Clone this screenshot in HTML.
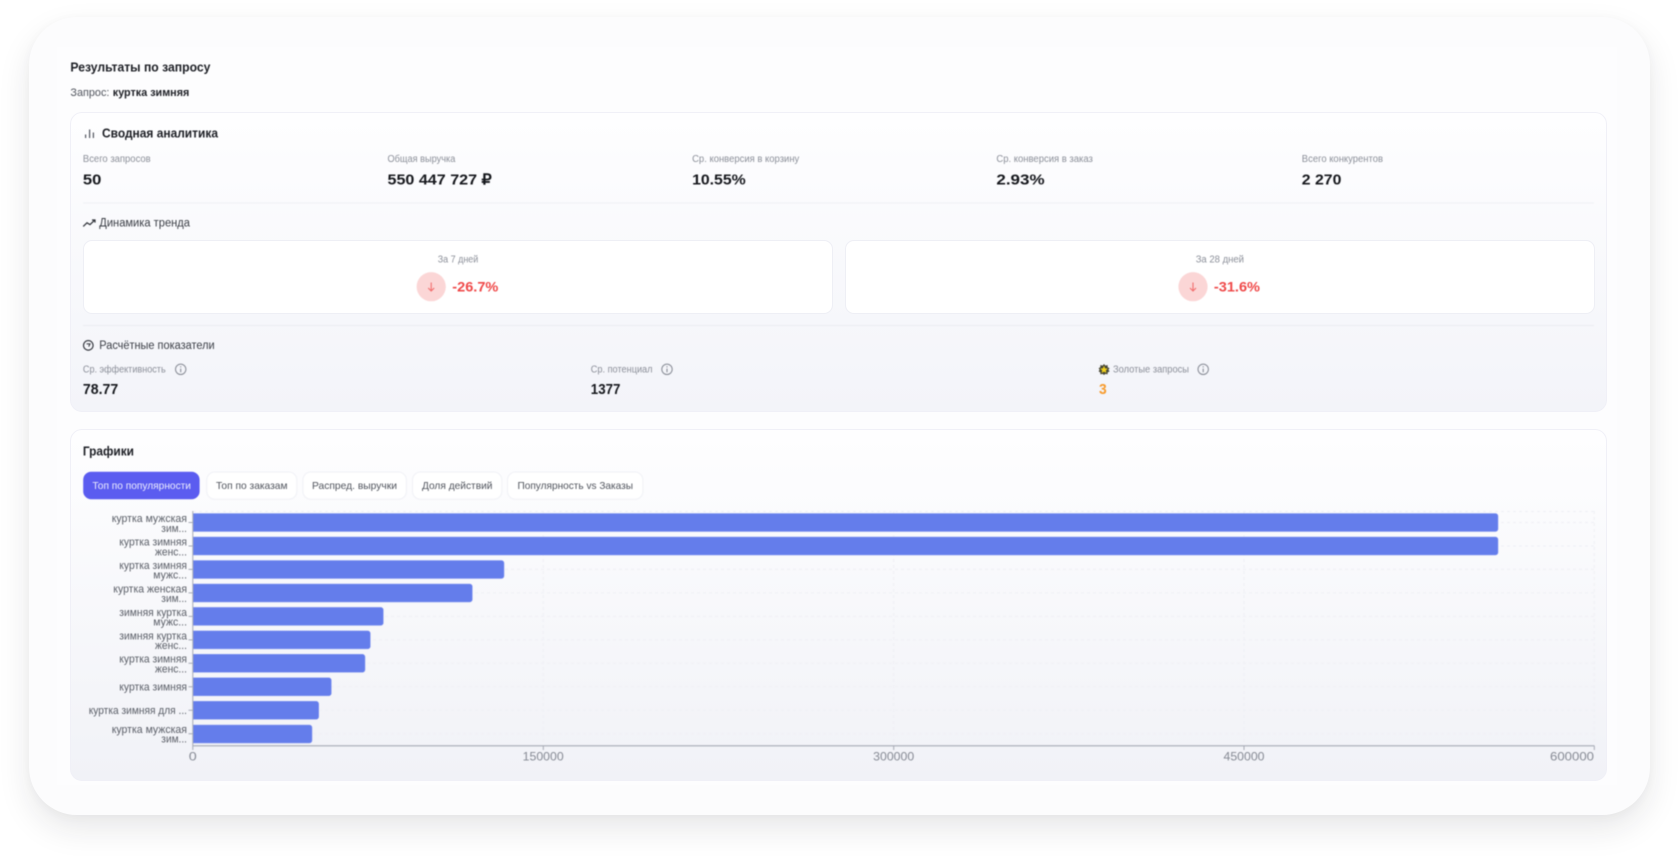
<!DOCTYPE html>
<html lang="ru">
<head>
<meta charset="utf-8">
<title>Результаты по запросу</title>
<style>
html,body{margin:0;padding:0;width:1680px;height:856px;overflow:hidden;background:#fff}
.card{position:absolute;left:29px;top:17px;width:1621px;height:798px;border-radius:48px;background:#fcfcfd;box-shadow:0 14px 32px rgba(30,30,40,.10),0 2px 10px rgba(30,30,40,.03)}
.inner{position:absolute;left:57px;top:47px;width:1560px;height:738px;background:#fdfdfe}
.panel{position:absolute;box-sizing:border-box;border:1px solid #f0f0f7;border-radius:12px}
.p1{left:70px;top:112px;width:1537px;height:300px;background:linear-gradient(#fefeff,#f3f4f9)}
.p2{left:70px;top:429px;width:1537px;height:352px;background:linear-gradient(#fefeff,#f1f2f7)}
.box{position:absolute;box-sizing:border-box;background:#fff;border:1px solid #eeeff5;border-radius:9px;top:240px;height:74px}
svg{position:absolute;left:0;top:0;filter:blur(.45px)}
text{font-family:"Liberation Sans",sans-serif;white-space:pre}
.b{font-weight:700;fill:#1d1f25}
.l{font-size:10px;fill:#8b8f99}
.m{font-size:11.5px;fill:#3a3d45}
.v{font-size:15px;font-weight:700;fill:#16181d}
.t{font-size:10.5px;fill:#50545d}
.y{font-size:10.8px;fill:#5a5e67}
.x{font-size:12px;fill:#868a94}
</style>
</head>
<body>
<div class="card"></div>
<div class="inner"></div>
<div class="panel p1"></div>
<div class="panel p2"></div>
<div class="box" style="left:83px;width:750px"></div>
<div class="box" style="left:844.5px;width:750px"></div>

<svg width="1680" height="856" viewBox="0 0 1680 856" xmlns="http://www.w3.org/2000/svg">
  <!-- header -->
  <text class="b" x="70.4" y="71.3" font-size="13" textLength="140" lengthAdjust="spacingAndGlyphs">Результаты по запросу</text>
  <text x="70.4" y="96" font-size="11" fill="#50545d" textLength="39" lengthAdjust="spacingAndGlyphs">Запрос:</text>
  <text class="b" x="112.8" y="96" font-size="11" textLength="76.5" lengthAdjust="spacingAndGlyphs">куртка зимняя</text>

  <!-- summary -->
  <path d="M85.6 138V134.5M89.6 138V129.5M93.4 138V132.5" stroke="#50545d" stroke-width="1.2" fill="none"/>
  <text class="b" x="102" y="137.7" font-size="12.5" textLength="116" lengthAdjust="spacingAndGlyphs">Сводная аналитика</text>

  <text class="l" x="82.9" y="162" textLength="67.8" lengthAdjust="spacingAndGlyphs">Всего запросов</text>
  <text class="v" x="82.9" y="184.7" textLength="18.5" lengthAdjust="spacingAndGlyphs">50</text>
  <text class="l" x="387.5" y="162" textLength="67.9" lengthAdjust="spacingAndGlyphs">Общая выручка</text>
  <text class="v" x="387.5" y="184.7" textLength="104.3" lengthAdjust="spacingAndGlyphs">550 447 727 ₽</text>
  <text class="l" x="692.1" y="162" textLength="107.2" lengthAdjust="spacingAndGlyphs">Ср. конверсия в корзину</text>
  <text class="v" x="692.1" y="184.7" textLength="53.6" lengthAdjust="spacingAndGlyphs">10.55%</text>
  <text class="l" x="996.4" y="162" textLength="96.5" lengthAdjust="spacingAndGlyphs">Ср. конверсия в заказ</text>
  <text class="v" x="996.4" y="184.7" textLength="48.2" lengthAdjust="spacingAndGlyphs">2.93%</text>
  <text class="l" x="1301.8" y="162" textLength="81.2" lengthAdjust="spacingAndGlyphs">Всего конкурентов</text>
  <text class="v" x="1301.8" y="184.7" textLength="39.6" lengthAdjust="spacingAndGlyphs">2 270</text>

  <rect x="83" y="202.5" width="1511" height="1" fill="#f0f1f6"/>

  <!-- trend -->
  <path d="M83.2 226.4L87 222.8L90 224.6L94.4 220.4M92 220H95V222.6" stroke="#2e3138" stroke-width="1.2" fill="none"/>
  <text class="m" x="99.3" y="226.7" textLength="90.7" lengthAdjust="spacingAndGlyphs">Динамика тренда</text>

  <text class="l" x="437.7" y="262.3" textLength="40.6" lengthAdjust="spacingAndGlyphs">За 7 дней</text>
  <circle cx="431.2" cy="286.7" r="14.6" fill="#fbd6d6"/>
  <path d="M431.2 282.5V290.8M428.2 288L431.2 291L434.2 288" stroke="#f26d6d" stroke-width="1.1" fill="none"/>
  <text x="452.3" y="291.7" font-size="14" font-weight="700" fill="#ef4848" textLength="46" lengthAdjust="spacingAndGlyphs">-26.7%</text>

  <text class="l" x="1195.7" y="262.3" textLength="48.3" lengthAdjust="spacingAndGlyphs">За 28 дней</text>
  <circle cx="1193" cy="286.7" r="14.6" fill="#fbd6d6"/>
  <path d="M1193 282.5V290.8M1190 288L1193 291L1196 288" stroke="#f26d6d" stroke-width="1.1" fill="none"/>
  <text x="1213.9" y="291.7" font-size="14" font-weight="700" fill="#ef4848" textLength="46.1" lengthAdjust="spacingAndGlyphs">-31.6%</text>

  <rect x="83" y="325" width="1511" height="1" fill="#ebecf2"/>

  <!-- computed -->
  <circle cx="88.3" cy="345.4" r="4.8" fill="none" stroke="#2e3138" stroke-width="1.1"/>
  <path d="M86.6 343.9H90L88.7 346.6" stroke="#2e3138" stroke-width="1" fill="none"/>
  <text class="m" x="99.3" y="349" textLength="115.3" lengthAdjust="spacingAndGlyphs">Расчётные показатели</text>

  <text class="l" x="82.9" y="372.3" textLength="82.8" lengthAdjust="spacingAndGlyphs">Ср. эффективность</text>
  <circle cx="180.7" cy="369.3" r="5.2" fill="none" stroke="#878b95" stroke-width="1"/>
  <path d="M180.7 368.6V372.2M180.7 366.3V367.4" stroke="#878b95" stroke-width="1.1" fill="none"/>
  <text class="v" x="82.9" y="394" textLength="35.3" lengthAdjust="spacingAndGlyphs">78.77</text>

  <text class="l" x="590.8" y="372.3" textLength="61.7" lengthAdjust="spacingAndGlyphs">Ср. потенциал</text>
  <circle cx="667" cy="369.3" r="5.2" fill="none" stroke="#878b95" stroke-width="1"/>
  <path d="M667 368.6V372.2M667 366.3V367.4" stroke="#878b95" stroke-width="1.1" fill="none"/>
  <text class="v" x="590.8" y="394" textLength="29.6" lengthAdjust="spacingAndGlyphs">1377</text>

  <polygon points="1104,364 1105.5,365.6 1107.6,365 1107.7,367.2 1109.6,368.2 1108.4,369.8 1109.6,371.4 1107.7,372.4 1107.6,374.4 1105.5,373.9 1104,375 1102.5,373.9 1100.4,374.4 1100.3,372.4 1098.6,371.4 1099.6,369.8 1098.6,368.2 1100.3,367.2 1100.4,365 1102.5,365.6" fill="#4a4a38"/>
  <polygon points="1104,365.8 1105.1,368.4 1107.8,368.6 1105.8,370.4 1106.4,373 1104,371.6 1101.6,373 1102.2,370.4 1100.2,368.6 1102.9,368.4" fill="#f2d21c"/>
  <text class="l" x="1113" y="372.3" textLength="76" lengthAdjust="spacingAndGlyphs">Золотые запросы</text>
  <circle cx="1203.2" cy="369.3" r="5.2" fill="none" stroke="#878b95" stroke-width="1"/>
  <path d="M1203.2 368.6V372.2M1203.2 366.3V367.4" stroke="#878b95" stroke-width="1.1" fill="none"/>
  <text x="1099" y="394" font-size="15" font-weight="700" fill="#f79a2b" textLength="7.7" lengthAdjust="spacingAndGlyphs">3</text>

  <!-- charts header -->
  <text class="b" x="82.9" y="455.3" font-size="13" textLength="51.1" lengthAdjust="spacingAndGlyphs">Графики</text>

  <!-- tabs -->
  <rect x="83.2" y="471.8" width="116.4" height="27.4" rx="8" fill="#5b5cf0"/>
  <rect x="206.8" y="472" width="90" height="27.2" rx="8" fill="#fff" stroke="#f0f1f6"/>
  <rect x="302.9" y="472" width="103.5" height="27.2" rx="8" fill="#fff" stroke="#f0f1f6"/>
  <rect x="412.5" y="472" width="89.3" height="27.2" rx="8" fill="#fff" stroke="#f0f1f6"/>
  <rect x="507.5" y="472" width="135.4" height="27.2" rx="8" fill="#fff" stroke="#f0f1f6"/>
  <text x="92.4" y="489" font-size="10.5" fill="#eeeeff" textLength="98.6" lengthAdjust="spacingAndGlyphs">Топ по популярности</text>
  <text class="t" x="216" y="489" textLength="71.5" lengthAdjust="spacingAndGlyphs">Топ по заказам</text>
  <text class="t" x="312" y="489" textLength="85" lengthAdjust="spacingAndGlyphs">Распред. выручки</text>
  <text class="t" x="422" y="489" textLength="70.5" lengthAdjust="spacingAndGlyphs">Доля действий</text>
  <text class="t" x="517.5" y="489" textLength="115.5" lengthAdjust="spacingAndGlyphs">Популярность vs Заказы</text>

  <!-- grid -->
  <g stroke="#eff0f5" stroke-width="1" stroke-dasharray="3 3" fill="none">
    <path d="M193 511.5H1594"/>
    <path d="M193 522.5H1594M193 546H1594M193 569.4H1594M193 592.9H1594M193 616.4H1594M193 639.9H1594M193 663.3H1594M193 686.8H1594M193 710.3H1594M193 733.7H1594"/>
    <path d="M543.3 511V746M893.7 511V746M1244 511V746M1594.3 511V746"/>
  </g>

  <!-- bars -->
  <g fill="#647deb" stroke="#8498f0" stroke-width=".5">
    <path d="M193 513.5H1495.5a2.5 2.5 0 0 1 2.5 2.5V529a2.5 2.5 0 0 1-2.5 2.5H193Z"/>
    <path d="M193 537H1495.5a2.5 2.5 0 0 1 2.5 2.5V552.5a2.5 2.5 0 0 1-2.5 2.5H193Z"/>
    <path d="M193 560.5H501.5a2.5 2.5 0 0 1 2.5 2.5V576a2.5 2.5 0 0 1-2.5 2.5H193Z"/>
    <path d="M193 584H469.8a2.5 2.5 0 0 1 2.5 2.5V599.5a2.5 2.5 0 0 1-2.5 2.5H193Z"/>
    <path d="M193 607.4H380.8a2.5 2.5 0 0 1 2.5 2.5V622.9a2.5 2.5 0 0 1-2.5 2.5H193Z"/>
    <path d="M193 630.9H367.8a2.5 2.5 0 0 1 2.5 2.5V646.4a2.5 2.5 0 0 1-2.5 2.5H193Z"/>
    <path d="M193 654.3H362.5a2.5 2.5 0 0 1 2.5 2.5V669.8a2.5 2.5 0 0 1-2.5 2.5H193Z"/>
    <path d="M193 677.8H328.8a2.5 2.5 0 0 1 2.5 2.5V693.3a2.5 2.5 0 0 1-2.5 2.5H193Z"/>
    <path d="M193 701.3H316.2a2.5 2.5 0 0 1 2.5 2.5V716.8a2.5 2.5 0 0 1-2.5 2.5H193Z"/>
    <path d="M193 725H309.5a2.5 2.5 0 0 1 2.5 2.5V740.5a2.5 2.5 0 0 1-2.5 2.5H193Z"/>
  </g>

  <!-- axes -->
  <path d="M192.8 511V746" stroke="#a6aab5" stroke-width="1" fill="none"/>
  <path d="M192.5 745.8H1594.5" stroke="#a6aab5" stroke-width="1.1" fill="none"/>
  <path d="M192.8 746V750M543.3 746V750M893.7 746V750M1244 746V750M1594.3 746V750" stroke="#a6aab5" stroke-width="1" fill="none"/>
  <path d="M188.5 522.5H192.5M188.5 546H192.5M188.5 569.4H192.5M188.5 592.9H192.5M188.5 616.4H192.5M188.5 639.9H192.5M188.5 663.3H192.5M188.5 686.8H192.5M188.5 710.3H192.5M188.5 733.7H192.5" stroke="#a6aab5" stroke-width="1" fill="none"/>

  <!-- y labels -->
  <text class="y" x="111.7" y="522" textLength="75.3" lengthAdjust="spacingAndGlyphs">куртка мужская</text>
  <text class="y" x="161.3" y="531.8" textLength="25.7" lengthAdjust="spacingAndGlyphs">зим...</text>
  <text class="y" x="119.3" y="545.5" textLength="67.7" lengthAdjust="spacingAndGlyphs">куртка зимняя</text>
  <text class="y" x="155" y="555.3" textLength="32" lengthAdjust="spacingAndGlyphs">женс...</text>
  <text class="y" x="119.3" y="569" textLength="67.7" lengthAdjust="spacingAndGlyphs">куртка зимняя</text>
  <text class="y" x="153.3" y="578.7" textLength="33.7" lengthAdjust="spacingAndGlyphs">мужс...</text>
  <text class="y" x="113.3" y="592.4" textLength="73.7" lengthAdjust="spacingAndGlyphs">куртка женская</text>
  <text class="y" x="161.3" y="602.2" textLength="25.7" lengthAdjust="spacingAndGlyphs">зим...</text>
  <text class="y" x="119.3" y="615.9" textLength="67.7" lengthAdjust="spacingAndGlyphs">зимняя куртка</text>
  <text class="y" x="153.3" y="625.6" textLength="33.7" lengthAdjust="spacingAndGlyphs">мужс...</text>
  <text class="y" x="119.3" y="639.4" textLength="67.7" lengthAdjust="spacingAndGlyphs">зимняя куртка</text>
  <text class="y" x="155" y="649.1" textLength="32" lengthAdjust="spacingAndGlyphs">женс...</text>
  <text class="y" x="119.3" y="662.7" textLength="67.7" lengthAdjust="spacingAndGlyphs">куртка зимняя</text>
  <text class="y" x="155" y="672.5" textLength="32" lengthAdjust="spacingAndGlyphs">женс...</text>
  <text class="y" x="119.3" y="690.7" textLength="67.7" lengthAdjust="spacingAndGlyphs">куртка зимняя</text>
  <text class="y" x="88.7" y="714.2" textLength="98.3" lengthAdjust="spacingAndGlyphs">куртка зимняя для ...</text>
  <text class="y" x="111.7" y="733" textLength="75.3" lengthAdjust="spacingAndGlyphs">куртка мужская</text>
  <text class="y" x="161.3" y="742.7" textLength="25.7" lengthAdjust="spacingAndGlyphs">зим...</text>

  <!-- x labels -->
  <text class="x" x="188.8" y="760.5" textLength="8" lengthAdjust="spacingAndGlyphs">0</text>
  <text class="x" x="522.7" y="760.5" textLength="41" lengthAdjust="spacingAndGlyphs">150000</text>
  <text class="x" x="873.2" y="760.5" textLength="41" lengthAdjust="spacingAndGlyphs">300000</text>
  <text class="x" x="1223.5" y="760.5" textLength="41" lengthAdjust="spacingAndGlyphs">450000</text>
  <text class="x" x="1550" y="760.5" textLength="44" lengthAdjust="spacingAndGlyphs">600000</text>
</svg>
</body>
</html>
